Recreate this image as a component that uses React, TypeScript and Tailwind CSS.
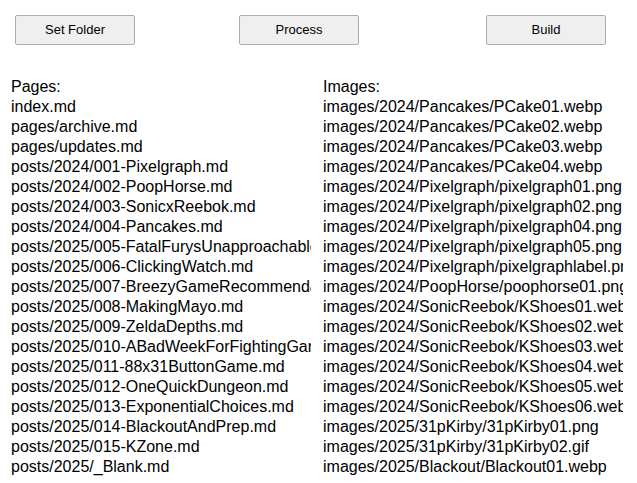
import React from "react";

const PAGES = [
  "index.md",
  "pages/archive.md",
  "pages/updates.md",
  "posts/2024/001-Pixelgraph.md",
  "posts/2024/002-PoopHorse.md",
  "posts/2024/003-SonicxReebok.md",
  "posts/2024/004-Pancakes.md",
  "posts/2025/005-FatalFurysUnapproachable.md",
  "posts/2025/006-ClickingWatch.md",
  "posts/2025/007-BreezyGameRecommendations.md",
  "posts/2025/008-MakingMayo.md",
  "posts/2025/009-ZeldaDepths.md",
  "posts/2025/010-ABadWeekForFightingGames.md",
  "posts/2025/011-88x31ButtonGame.md",
  "posts/2025/012-OneQuickDungeon.md",
  "posts/2025/013-ExponentialChoices.md",
  "posts/2025/014-BlackoutAndPrep.md",
  "posts/2025/015-KZone.md",
  "posts/2025/_Blank.md",
];

const IMAGES = [
  "images/2024/Pancakes/PCake01.webp",
  "images/2024/Pancakes/PCake02.webp",
  "images/2024/Pancakes/PCake03.webp",
  "images/2024/Pancakes/PCake04.webp",
  "images/2024/Pixelgraph/pixelgraph01.png",
  "images/2024/Pixelgraph/pixelgraph02.png",
  "images/2024/Pixelgraph/pixelgraph04.png",
  "images/2024/Pixelgraph/pixelgraph05.png",
  "images/2024/Pixelgraph/pixelgraphlabel.png",
  "images/2024/PoopHorse/poophorse01.png",
  "images/2024/SonicReebok/KShoes01.webp",
  "images/2024/SonicReebok/KShoes02.webp",
  "images/2024/SonicReebok/KShoes03.webp",
  "images/2024/SonicReebok/KShoes04.webp",
  "images/2024/SonicReebok/KShoes05.webp",
  "images/2024/SonicReebok/KShoes06.webp",
  "images/2025/31pKirby/31pKirby01.png",
  "images/2025/31pKirby/31pKirby02.gif",
  "images/2025/Blackout/Blackout01.webp",
];

function FormButton({ label, className }: { label: string; className?: string }) {
  return (
    <button
      className={`h-[30px] w-[120px] rounded-[2px] border border-[#adadad] bg-[#efefef] text-[13px] text-black ${className ?? ""}`}
    >
      {label}
    </button>
  );
}

// Each list clips its long names at the column edge, like a fixed-width label.
function FileList({ title, items, className }: { title: string; items: string[]; className?: string }) {
  return (
    <div className={`w-[300px] overflow-hidden text-[16px] leading-[20px] text-black ${className ?? ""}`}>
      <div className="whitespace-nowrap">{title}</div>
      {items.map((f) => (
        <div key={f} className="whitespace-nowrap">
          {f}
        </div>
      ))}
    </div>
  );
}

export default function App() {
  return (
    <div
      className="h-[483px] w-[637px] overflow-hidden bg-white"
      style={{ fontFamily: '"Liberation Sans", Arial, sans-serif' }}
    >
      {/* toolbar */}
      <div className="flex pt-[15px]">
        <FormButton label="Set Folder" className="ml-[15px]" />
        <FormButton label="Process" className="ml-[104px]" />
        <FormButton label="Build" className="ml-[127px]" />
      </div>

      {/* lists */}
      <div className="mt-[32px] flex">
        <FileList title="Pages:" items={PAGES} className="ml-[11px]" />
        <FileList title="Images:" items={IMAGES} className="ml-[12px]" />
      </div>
    </div>
  );
}
